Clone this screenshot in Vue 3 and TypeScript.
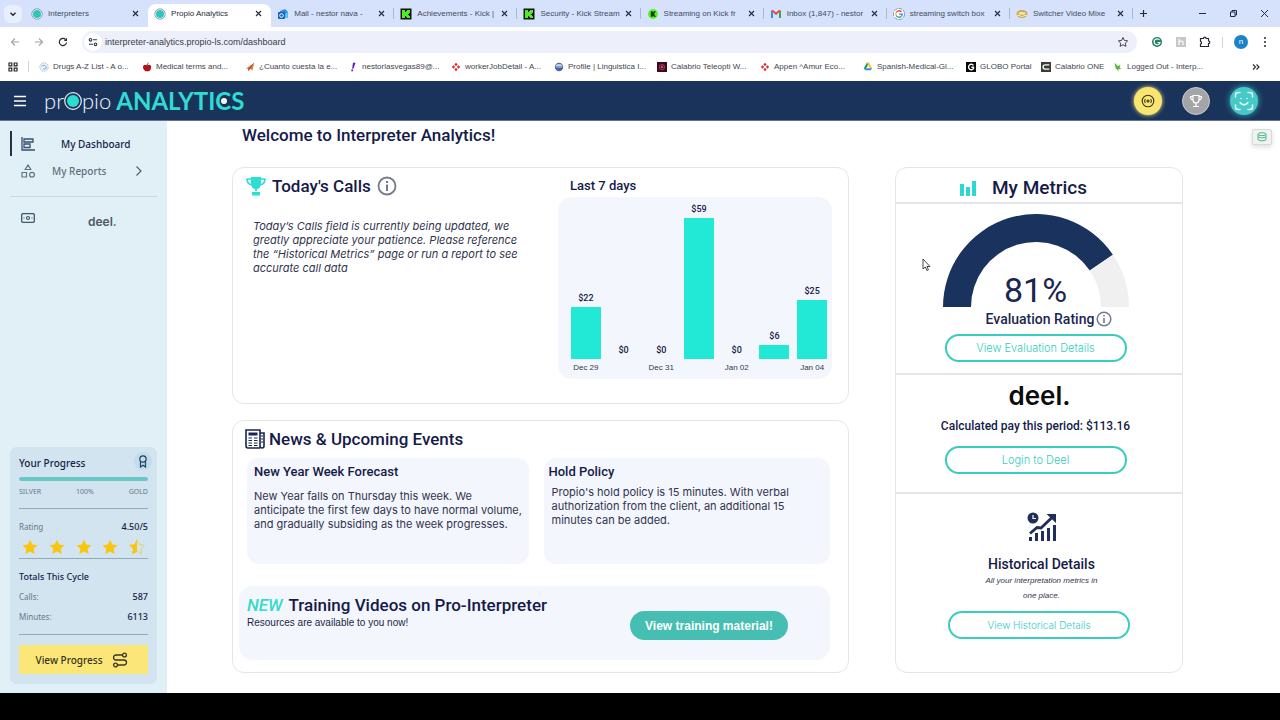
<script setup lang="ts">
interface Tab { title: string; icon: string; active?: boolean }
interface Bookmark { title: string; icon: string }
interface Day { label: string; value: number }

const tabs: Tab[] = [
  { title: 'Interpreters', icon: 'propio' },
  { title: 'Propio Analytics', icon: 'propio', active: true },
  { title: 'Mail - nestor nava - ', icon: 'outlook' },
  { title: 'Achievements - Kick |', icon: 'kick' },
  { title: 'Security - Kick Stream', icon: 'kick' },
  { title: 'Streaming on Kick fr', icon: 'kickround' },
  { title: 'Inbox (1,847) - nestor', icon: 'gmail' },
  { title: 'streaming switch box', icon: 'google' },
  { title: 'Switcher Video Mixe', icon: 'switcher' },
]

const bookmarks: Bookmark[] = [
  { title: 'Drugs A-Z List - A o...', icon: 'drugs' },
  { title: 'Medical terms and...', icon: 'apple' },
  { title: '¿Cuanto cuesta la e...', icon: 'plane' },
  { title: 'nestorlasvegas89@...', icon: 'bang' },
  { title: 'workerJobDetail - A...', icon: 'appen' },
  { title: 'Profile | Linguistica I...', icon: 'globe' },
  { title: 'Calabrio Teleopti W...', icon: 'teleopti' },
  { title: 'Appen ^Amur Eco...', icon: 'appen' },
  { title: 'Spanish-Medical-Gl...', icon: 'drive' },
  { title: 'GLOBO Portal', icon: 'globo' },
  { title: 'Calabrio ONE', icon: 'calabrio' },
  { title: 'Logged Out - Interp...', icon: 'bird' },
]

const days: Day[] = [
  { label: 'Dec 29', value: 22 },
  { label: '', value: 0 },
  { label: 'Dec 31', value: 0 },
  { label: '', value: 59 },
  { label: 'Jan 02', value: 0 },
  { label: '', value: 6 },
  { label: 'Jan 04', value: 25 },
]
const tallestBar = 141
const highest = Math.max(...days.map((day) => day.value))
const barHeight = (value: number): string => `${Math.floor((value / highest) * tallestBar)}px`

const rating = 81
const point = (radius: number, percent: number): string => {
  const angle = Math.PI * (1 - percent / 100)
  return `${(93 + radius * Math.cos(angle)).toFixed(1)} ${(93 - radius * Math.sin(angle)).toFixed(1)}`
}
const arc = (from: number, to: number): string =>
  `M${point(93, from)}A93 93 0 0 1 ${point(93, to)}L${point(65, to)}A65 65 0 0 0 ${point(65, from)}Z`

const starPath = 'M8 0.8l2.3 4.7 5.1 .7-3.7 3.6 .9 5.1L8 12.5l-4.6 2.4 .9-5.1L.6 6.2l5.1-.7z'
const url = 'interpreter-analytics.propio-ls.com/dashboard'
</script>

<template>
  <div class="screen">
    <div class="tabstrip">
      <button class="tab-search" aria-label="Search tabs">
        <svg width="8" height="8" viewBox="0 0 8 8"><path d="M1.500 2.700L4 5.200l2.500-2.500" fill="none" stroke="#1f2530" stroke-width="1.400" /></svg>
      </button>
      <div class="tabs">
        <div v-for="(tab, i) in tabs" :key="i" class="tab" :class="{ active: tab.active }">
          <svg class="fav" viewBox="0 0 12 12" aria-hidden="true">
            <template v-if="tab.icon === 'propio'">
              <circle cx="6" cy="6" r="5.200" fill="#fff" stroke="#70889e" stroke-width=".8" /><circle cx="6" cy="6" r="4" fill="#2fc5bb" />
            </template>
            <template v-else-if="tab.icon === 'outlook'">
              <path d="M3 3l5-2 3 3v6H3z" fill="#2b8ee6" /><rect x="1" y="4" width="7" height="7" rx="1" fill="#1165c1" /><circle cx="4.500" cy="7.500" r="1.800" fill="none" stroke="#fff" /><path d="M8 6l3-2v6H8z" fill="#5bc0f5" />
            </template>
            <template v-else-if="tab.icon === 'kick'">
              <rect x=".5" y=".5" width="11" height="11" fill="#111" /><path d="M2 2h3v2h1V3h1V2h3v3H9v1H8v1h1v1h1v2H7V9H6V8H5v2H2z" fill="#49ef20" />
            </template>
            <template v-else-if="tab.icon === 'kickround'">
              <circle cx="6" cy="6" r="5" fill="#59f32b" /><path d="M4 3.500h1.500V5L7 3.500h1.500L6.800 6l1.700 2.500H7L5.500 7v1.500H4z" fill="#123b0b" stroke="#123b0b" stroke-width=".5" />
            </template>
            <template v-else-if="tab.icon === 'gmail'">
              <path d="M1 10V2.500L3 4v6z" fill="#4285f4" /><path d="M11 10V2.500L9 4v6z" fill="#34a853" /><path d="M1 2.500l2-.5 3 2.500L9 2l2 .5-5 4.500z" fill="#ea4335" />
            </template>
            <template v-else-if="tab.icon === 'google'">
              <circle cx="6" cy="6" r="5.600" fill="#fff" stroke="#5c84c4" stroke-width=".8" stroke-dasharray="4 1" /><path d="M8.500 3.800A3.300 3.300 0 0 0 3.200 4.500" fill="none" stroke="#ea4335" stroke-width="1.300" /><path d="M3.200 4.500a3.300 3.300 0 0 0 0 3" fill="none" stroke="#fbbc05" stroke-width="1.300" /><path d="M3.200 7.500a3.300 3.300 0 0 0 5 1" fill="none" stroke="#34a853" stroke-width="1.300" /><path d="M6 6.200h3.200a3.300 3.300 0 0 1-1 2.300" fill="none" stroke="#4285f4" stroke-width="1.300" />
            </template>
            <template v-else>
              <ellipse cx="6" cy="6" rx="5.500" ry="4" fill="#c7a646" /><ellipse cx="6" cy="5.200" rx="3.600" ry="1.500" fill="#eee3a5" /><path d="M1 7q5 3 10 0" stroke="#fff" fill="none" stroke-width=".8" />
            </template>
          </svg>
          <span class="tab-title">{{ tab.title }}</span>
          <button class="tab-close" :aria-label="`Close ${tab.title}`">
            <svg width="7" height="7" viewBox="0 0 7 7"><path d="M1 1l5 5M6 1L1 6" stroke="#222a38" stroke-width="1.100" /></svg>
          </button>
        </div>
      </div>
      <div class="window-tools">
        <button aria-label="New tab"><svg width="9" height="9" viewBox="0 0 9 9"><path d="M4.500 1v7M1 4.500h7" stroke="#222a38" stroke-width="1.200" /></svg></button>
        <span class="spring"></span>
        <button aria-label="Minimize"><svg width="9" height="9" viewBox="0 0 9 9"><path d="M1 4.500h7" stroke="#222a38" /></svg></button>
        <button aria-label="Restore"><svg width="9" height="9" viewBox="0 0 9 9"><path d="M1.500 3h4.500v4.500H1.500zM3 3V1.500h4.500V6H6" fill="none" stroke="#222a38" /></svg></button>
        <button aria-label="Close window"><svg width="9" height="9" viewBox="0 0 9 9"><path d="M1 1l7 7M8 1L1 8" stroke="#222a38" /></svg></button>
      </div>
    </div>

    <div class="toolbar">
      <button aria-label="Back"><svg width="10" height="10" viewBox="0 0 10 10"><path d="M9 5H1.500M5 1.500L1.500 5 5 8.500" fill="none" stroke="#a0a4ab" stroke-width="1.100" /></svg></button>
      <button aria-label="Forward"><svg width="10" height="10" viewBox="0 0 10 10"><path d="M1 5h7.500M5 1.500L8.500 5 5 8.500" fill="none" stroke="#a0a4ab" stroke-width="1.100" /></svg></button>
      <button aria-label="Reload"><svg width="10" height="10" viewBox="0 0 10 10"><path d="M8.500 5.500A3.600 3.600 0 1 1 7.500 2.500" fill="none" stroke="#24282f" stroke-width="1.200" /><path d="M9 .8v3.200H5.800z" fill="#24282f" /></svg></button>
      <div class="omnibox">
        <span class="site-info"><svg width="10" height="10" viewBox="0 0 10 10"><g fill="none" stroke="#333942" stroke-width="1.100"><circle cx="2.500" cy="2.800" r="1.300" /><path d="M5 2.800h4M1 7.300h4" /><circle cx="7.500" cy="7.300" r="1.300" /></g></svg></span>
        <input type="text" aria-label="Address" :value="url" />
        <svg class="bookmark-star" width="10" height="10" viewBox="0 0 16 16"><path :d="starPath" fill="none" stroke="#333942" stroke-width="1.500" /></svg>
      </div>
      <div class="extensions">
        <svg width="12" height="12" viewBox="0 0 12 12"><circle cx="6" cy="6" r="5" fill="#1f8264" /><path d="M8.500 4A3 3 0 1 0 9 6.500H6.500" fill="none" stroke="#fff" stroke-width="1.200" /></svg>
        <svg width="12" height="12" viewBox="0 0 12 12"><rect x="1" y="1" width="10" height="10" fill="#c6c7c9" /><path d="M4 3v6M4 6q3-2 4 0v3" fill="none" stroke="#fff" stroke-width="1.200" /></svg>
        <svg width="12" height="12" viewBox="0 0 12 12"><path d="M1.500 2.500h3a1.300 1.300 0 0 1 2.600 0h2.400V5a1.300 1.300 0 0 1 0 2.600v2.900h-8V8a1.400 1.400 0 0 0 0-2.700z" fill="none" stroke="#24282f" stroke-width="1.200" /></svg>
        <span class="rule"></span>
        <span class="avatar">n</span>
        <svg width="4" height="12" viewBox="0 0 4 12"><g fill="#24282f"><circle cx="2" cy="2" r="1" /><circle cx="2" cy="6" r="1" /><circle cx="2" cy="10" r="1" /></g></svg>
      </div>
    </div>

    <nav class="bookmarks" aria-label="Bookmarks">
      <div class="apps"><svg width="10" height="10" viewBox="0 0 10 10"><path d="M1 1h2.800v2.800H1zM6.200 1H9v2.800H6.200zM1 6.200h2.800V9H1zM6.200 6.200H9V9H6.200z" fill="none" stroke="#24282f" stroke-width="1.200" /></svg><span class="rule"></span></div>
      <a v-for="(mark, i) in bookmarks" :key="i" href="#">
        <svg width="10" height="10" viewBox="0 0 12 12" aria-hidden="true">
          <template v-if="mark.icon === 'drugs'"><circle cx="6" cy="6" r="5" fill="#edf5fb" stroke="#94b5d3" stroke-dasharray="2 1" /><path d="M3 5q3-3 6 1-1 4-4 2" fill="none" stroke="#6d9bc4" /></template>
          <template v-else-if="mark.icon === 'apple'"><path d="M6 4q4-2 5 1 0 5-3 6H4Q1 9 1 6q1-4 5-2z" fill="#b1121b" /><path d="M6 4Q6 2 8 1" stroke="#4d321c" fill="none" /></template>
          <template v-else-if="mark.icon === 'plane'"><path d="M1 8l10-7-2 9-3-2-2 3V8z" fill="#e27a3a" /><path d="M11 1L4 8v3z" fill="#b5352b" /></template>
          <template v-else-if="mark.icon === 'bang'"><path d="M6 1h3L6.500 8H5zM4 9h2v2H4z" fill="#5b16c4" /></template>
          <template v-else-if="mark.icon === 'appen'"><path d="M6 1l2 2-2 2-2-2zM9 4l2 2-2 2-2-2zM3 4l2 2-2 2-2-2zM6 7l2 2-2 2-2-2z" fill="#d83232" /></template>
          <template v-else-if="mark.icon === 'globe'"><circle cx="6" cy="6" r="5" fill="#55678f" /><ellipse cx="6" cy="5" rx="4" ry="2.500" fill="#c7d2ec" /><path d="M2 6h8M3 8h7" stroke="#2853bd" /></template>
          <template v-else-if="mark.icon === 'teleopti'"><rect width="12" height="12" fill="#3a0a1d" /><circle cx="6" cy="6" r="3" fill="none" stroke="#a72a50" stroke-width="1.500" /><circle cx="6" cy="6" r="1" fill="#eee" /></template>
          <template v-else-if="mark.icon === 'drive'"><path d="M4.500 1h3L4 7.500 2.500 10 1 7.500z" fill="#1ca261" /><path d="M7.500 1L11 7.500H8L4.500 1z" fill="#fcc934" /><path d="M4 7.500h7L9.500 10h-7z" fill="#4285f4" /></template>
          <template v-else-if="mark.icon === 'globo'"><rect width="12" height="12" fill="#090909" /><path d="M9 4A3.300 3.300 0 1 0 9 8V6.300H6.500" fill="none" stroke="#fff" stroke-width="1.600" /></template>
          <template v-else-if="mark.icon === 'calabrio'"><rect width="12" height="12" fill="#3b3d3b" /><path d="M10 3.500H5a2.500 2.500 0 0 0 0 5h5" fill="none" stroke="#fff" stroke-width="1.600" /></template>
          <template v-else><path d="M2 1l4 4 3-2-1 4 2 1-4 1 1 3-4-5z" fill="#59b63d" /></template>
        </svg>
        <span>{{ mark.title }}</span>
      </a>
      <button class="more" aria-label="More bookmarks"><svg width="8" height="8" viewBox="0 0 8 8"><path d="M1 1.500L3.500 4 1 6.500M4.500 1.500L7 4 4.500 6.500" fill="none" stroke="#24282f" stroke-width="1.100" /></svg></button>
    </nav>

    <header class="app-header">
      <button class="burger" aria-label="Menu"><svg width="12" height="12" viewBox="0 0 12 12"><path d="M0 1.500h12M0 6h12M0 10.500h12" stroke="#fff" stroke-width="1.400" /></svg></button>
      <div class="brand">
        <span class="brand-light">pr</span>
        <svg class="ring" width="18" height="18" viewBox="0 0 18 18"><circle cx="9" cy="9" r="8.300" fill="none" stroke="#e7eef7" stroke-width="1.200" /><circle cx="9" cy="9" r="6" fill="#2cdccf" /></svg>
        <span class="brand-light">pio</span>
        <span class="brand-bold">ANALYTI<span class="dotted">C</span>S</span>
      </div>
      <div class="header-actions">
        <button class="round yellow" aria-label="Rewards"><svg width="14" height="14" viewBox="0 0 14 14"><g fill="none" stroke="#3a3512" stroke-width="1.100"><circle cx="7" cy="7" r="5.800" /><circle cx="7" cy="7" r="1" /><path d="M4.300 9Q2.800 7 4.300 5M9.700 5q1.500 2 0 4" /></g></svg></button>
        <button class="round grey" aria-label="Achievements"><svg width="14" height="14" viewBox="0 0 14 14"><g fill="none" stroke="#fff" stroke-width="1.200"><path d="M4 1.500h6V6q0 3-3 3T4 6zM4 2.500H1.500Q1.500 6 4.300 6M10 2.500h2.500Q12.500 6 9.700 6M7 9v3M4 12.500h6" /></g></svg></button>
        <button class="round teal" aria-label="Profile"><svg width="20" height="20" viewBox="0 0 20 20"><g fill="none" stroke="#e8ffff" stroke-width="1.500" stroke-linecap="round"><path d="M1.500 6V4Q1.500 1.500 4 1.500h2M14 1.500h2q2.500 0 2.500 2.500v2M18.500 14v2q0 2.500-2.500 2.500h-2M6 18.500H4Q1.500 18.500 1.500 16v-2M6 11.500q4 4.500 8 0M7 7.500v.1M13 7.500v.1" /></g></svg></button>
      </div>
    </header>

    <div class="body">
      <aside class="sidebar">
        <nav class="side-nav" aria-label="Main">
          <a class="current" href="#">
            <svg width="14" height="14" viewBox="0 0 14 14"><path d="M1 0v13h13M3 2h9v3H3zM3 7h6v3.500H3z" fill="none" stroke="#35506a" stroke-width="1.300" /></svg>
            <span>My Dashboard</span>
          </a>
          <a class="reports" href="#">
            <svg width="14" height="14" viewBox="0 0 14 14"><g fill="none" stroke="#5f7482" stroke-width="1.200"><path d="M7 1l2.800 4.500H4.200zM1 8.500h4.500V13H1z" /><circle cx="11" cy="10.700" r="2.400" /></g></svg>
            <span>My Reports</span>
            <svg width="8" height="12" viewBox="0 0 8 12"><path d="M1.500 1.500L6 6l-4.500 4.500" fill="none" stroke="#4e626f" stroke-width="1.200" /></svg>
          </a>
          <hr />
          <a class="pay" href="#">
            <svg width="14" height="10" viewBox="0 0 14 10"><rect x=".7" y=".7" width="12.600" height="8.600" rx="1" fill="none" stroke="#435768" stroke-width="1.300" /><circle cx="7" cy="5" r="1.500" fill="none" stroke="#435768" stroke-width="1.200" /><path d="M2.500 5h1M10.500 5h1" stroke="#435768" /></svg>
            <span class="deel">deel.</span>
          </a>
        </nav>

        <section class="progress-card">
          <div class="line title"><h2>Your Progress</h2>
            <span class="medal"><svg width="10" height="13" viewBox="0 0 10 13"><g fill="none" stroke="#1d4462" stroke-width="1.200"><circle cx="5" cy="4" r="3.200" /><path d="M2.500 6v6L5 10.300 7.500 12V6" /></g></svg></span>
          </div>
          <div class="track"></div>
          <div class="line levels"><span>SILVER</span><span>100%</span><span>GOLD</span></div>
          <div class="line rating"><span>Rating</span><b>4.50/5</b></div>
          <div class="stars">
            <svg v-for="n in 5" :key="n" width="16" height="16" viewBox="0 0 16 16">
              <path v-if="n < 5" :d="starPath" fill="#fac60d" />
              <template v-else><path :d="starPath" fill="none" stroke="#efcc50" stroke-width=".8" /><path d="M8 .8v11.700l-4.600 2.400 .9-5.100L.6 6.200l5.100-.7z" fill="#fac60d" /></template>
            </svg>
          </div>
          <h3>Totals This Cycle</h3>
          <div class="line total"><span>Calls:</span><b>587</b></div>
          <div class="line total"><span>Minutes:</span><b>6113</b></div>
          <button class="view-progress">View Progress
            <svg width="16" height="16" viewBox="0 0 16 16"><g fill="none" stroke="#3c3426" stroke-width="1.300"><circle cx="12.500" cy="3" r="1.900" /><circle cx="3.500" cy="13" r="1.900" /><path d="M10.600 3H4a2.500 2.500 0 0 0 0 5h8a2.500 2.500 0 0 1 0 5H5.400" /></g></svg>
          </button>
        </section>
      </aside>

      <main>
        <div class="welcome">
          <h1>Welcome to Interpreter Analytics!</h1>
          <button class="data-button" aria-label="Data"><svg width="10" height="10" viewBox="0 0 10 10"><g fill="none" stroke="#4cba85"><ellipse cx="5" cy="2.200" rx="4" ry="1.500" /><path d="M1 2.200v5.600q4 2.500 8 0V2.200M1 5q4 2 8 0" /></g></svg></button>
        </div>
        <div class="cards">
          <section class="card today">
            <div class="calls">
              <h2>
                <svg width="20" height="20" viewBox="0 0 20 20"><path d="M5 1h10v7q-1 5-4 5v2H9v-2Q6 13 5 8z" fill="#2be0d2" /><path d="M5 3H1Q1 8 6 9M15 3h4q0 5-5 6" fill="none" stroke="#2be0d2" stroke-width="1.600" /><path d="M6 16h8v3.500H6z" fill="#2be0d2" /></svg>
                Today's Calls
                <svg width="20" height="20" viewBox="0 0 20 20"><circle cx="10" cy="10" r="8.500" fill="none" stroke="#747b8b" stroke-width="1.800" /><path d="M10 5v2M10 8.500V15" stroke="#747b8b" stroke-width="2" /></svg>
              </h2>
              <p>Today’s Calls field is currently being updated, we greatly appreciate your patience. Please reference the “Historical Metrics” page or run a report to see accurate call data</p>
            </div>
            <div class="week">
              <h3>Last 7 days</h3>
              <div class="chart">
                <div v-for="(day, i) in days" :key="i" class="day">
                  <span class="amount">${{ day.value }}</span>
                  <span class="bar" :style="{ height: barHeight(day.value) }"></span>
                  <span class="date">{{ day.label }}</span>
                </div>
              </div>
            </div>
          </section>

          <section class="card news">
            <h2>
              <svg width="20" height="20" viewBox="0 0 20 20"><g fill="none" stroke="#1a2450" stroke-width="1.600"><path d="M15 19H3q-2 0-2-2V1h14v16q0 2 2 2t2-2V4h-4" /></g><path d="M3.500 3.500h9v3h-9z" fill="#1a2450" /><path d="M3.500 9h3.500M9 9h3.500M3.500 11.500H7M9 11.500h3.500M3.500 14H7M9 14h3.500M3.500 16.500H7M9 16.500h3.500M16 7h2M16 10h2M16 13h2" stroke="#1a2450" stroke-width="1.200" /></svg>
              News &amp; Upcoming Events
            </h2>
            <div class="stories">
              <article>
                <h3>New Year Week Forecast</h3>
                <p>New Year falls on Thursday this week. We<br />anticipate the first few days to have normal volume, and gradually subsiding as the week progresses.</p>
              </article>
              <article class="hold">
                <h3>Hold Policy</h3>
                <p>Propio's hold policy is 15 minutes. With verbal authorization from the client, an additional 15 minutes can be added.</p>
              </article>
            </div>
            <div class="training">
              <div>
                <h2><em>NEW</em> Training Videos on Pro-Interpreter</h2>
                <p>Resources are available to you now!</p>
              </div>
              <button>View training material!</button>
            </div>
          </section>

          <section class="card metrics">
            <h2>
              <svg width="16" height="16" viewBox="0 0 16 16"><path d="M0 4h4v12H0zM6 7h4v9H6zM12 1h4v15h-4z" fill="#2bd9d0" /></svg>
              My Metrics
            </h2>
            <div class="evaluation">
              <div class="gauge">
                <svg width="186" height="93" viewBox="0 0 186 93" aria-hidden="true">
                  <path :d="arc(0, rating)" fill="#1a335e" />
                  <path :d="arc(rating, 100)" fill="#f0f0f0" />
                </svg>
                <span>{{ rating }}%</span>
              </div>
              <h3>Evaluation Rating
                <svg width="16" height="16" viewBox="0 0 16 16"><circle cx="8" cy="8" r="6.800" fill="none" stroke="#747b8b" stroke-width="1.500" /><path d="M8 4v1.500M8 7v5" stroke="#747b8b" stroke-width="1.600" /></svg>
              </h3>
              <button>View Evaluation Details</button>
            </div>
            <div class="payment">
              <div class="deel">deel.</div>
              <p>Calculated pay this period: $113.16</p>
              <button>Login to Deel</button>
            </div>
            <div class="history">
              <svg width="30" height="30" viewBox="0 0 30 30"><circle cx="6" cy="6" r="5.500" fill="#1f2f5a" /><path d="M6 3v3.500h3" fill="none" stroke="#fff" stroke-width="1.200" /><path d="M3 21.500l7-6 4 .5L26 4.500" fill="none" stroke="#1f2f5a" stroke-width="2.800" /><path d="M19.500 2H29v9z" fill="#1f2f5a" /><path d="M2 25h3v4H2zM8 21h3v8H8zM14 19h3v10h-3zM20 16h3v13h-3zM26 13h3v16h-3z" fill="#1f2f5a" /></svg>
              <h3>Historical Details</h3>
              <p>All your interpretation metrics in one place.</p>
              <button>View Historical Details</button>
            </div>
          </section>
        </div>
        <svg class="pointer" width="9" height="13" viewBox="0 0 9 13"><path d="M1 1v10l2.300-2 1.600 3.500 1.500-.7L4.900 8.500H8z" fill="#fff" stroke="#333" stroke-width=".9" /></svg>
      </main>
    </div>
    <div class="bottom-strip"></div>
  </div>
</template>

<style>
body { margin: 0; }
</style>

<style scoped>
* { box-sizing: border-box; }
h1, h2, h3, p { margin: 0; font-weight: 500; }
button { margin: 0; padding: 0; border: 0; background: none; font: inherit; color: inherit; cursor: pointer; display: flex; align-items: center; justify-content: center; }
a { color: inherit; text-decoration: none; }
svg { flex: none; display: block; }

.screen { min-height: 100vh; display: flex; flex-direction: column; background: #fff; font-family: "Liberation Sans", Arial, sans-serif; color: #151b48; }

.tabstrip { height: 27px; display: flex; background: #d6e2fc; font-size: 8px; color: #414b5e; }
.tab-search { width: 18px; height: 18px; margin: 5px 3px 0 4px; border-radius: 6px; background: #e8effd; }
.tabs { flex: 1; min-width: 0; display: flex; }
.tab { flex: 1; min-width: 0; height: 27px; display: flex; align-items: center; gap: 5px; padding: 0 9px 0 6px; position: relative; }
.tab.active { background: #fff; border-radius: 8px 8px 0 0; color: #262c38; height: 23px; margin-top: 4px; padding-bottom: 4px; }
.tab:nth-child(n+3)::after { content: ""; position: absolute; right: 0; top: 8px; width: 1px; height: 11px; background: #abb8d3; }
.fav { width: 12px; height: 12px; }
.tab-title { flex: 1; min-width: 0; white-space: nowrap; line-height: 14px; }
.window-tools { width: 147px; display: flex; align-items: center; padding: 0 11px 0 6px; gap: 22px; }
.spring { flex: 1; }

.toolbar { height: 30px; display: flex; align-items: center; padding: 0 13px 0 10px; gap: 14px; font-size: 9px; }
.toolbar > button { width: 10px; height: 10px; }
.omnibox { flex: 1; height: 22px; display: flex; align-items: center; border-radius: 11px; background: #edf0fb; padding: 0 9px 0 2px; gap: 3px; }
.site-info { width: 18px; height: 18px; border-radius: 9px; background: #fff; display: flex; align-items: center; justify-content: center; }
.omnibox input { flex: 1; min-width: 0; border: 0; padding: 0; outline: 0; background: none; font: inherit; color: #373c46; }
.extensions { display: flex; align-items: center; gap: 12px; }
.rule { width: 1px; height: 11px; background: #cdd5e4; }
.extensions .rule { margin: 0 -1px; }
.avatar { width: 14px; height: 14px; margin-right: 3px; border-radius: 7px; background: #1b83c5; color: #fff; font-size: 8px; line-height: 13px; text-align: center; }

.bookmarks { height: 24px; display: grid; grid-template-columns: 31px repeat(9, minmax(0, 103fr)) minmax(0, 75fr) minmax(0, 72fr) minmax(0, 134fr) 18px; align-items: center; padding: 0 15px 5px 8px; font-size: 8px; color: #41464f; }
.bookmarks a { display: flex; align-items: center; gap: 4px; white-space: nowrap; }
.apps { display: flex; align-items: center; gap: 10px; }

.app-header { height: 40px; display: flex; align-items: center; background: #1a335b; padding: 0 22px 0 14px; border-bottom: 1px solid #647094; }
.burger { width: 12px; height: 12px; }
.brand { display: flex; align-items: center; margin-left: 18px; font-family: Lato, sans-serif; line-height: 32px; }
.brand-light { font-size: 22px; font-weight: 300; color: #eef3fa; }
.brand-bold { font-size: 24px; font-weight: 700; color: #2fdcd4; margin-left: 5px; }
.dotted { position: relative; }
.dotted::after { content: ""; position: absolute; left: 6px; top: 12px; width: 6px; height: 6px; border-radius: 3px; background: #fff; }
.header-actions { margin-left: auto; display: flex; gap: 20px; }
.round { width: 28px; height: 28px; border-radius: 14px; }
.yellow { background: #f9e671; box-shadow: 0 0 4px #f9e671; }
.grey { background: #a4a5a8; border: 1px solid #c9cacc; }
.teal { background: #46c9c7; box-shadow: 0 0 6px #3bb3bb; }

.body { flex: 1; display: flex; }
.sidebar { width: 167px; background: #e1eff7; padding: 10px 10px 9px; display: flex; flex-direction: column; justify-content: space-between; font-family: "Noto Sans", sans-serif; }
.side-nav { display: flex; flex-direction: column; font-size: 10px; }
.side-nav a { display: flex; align-items: center; padding-left: 11px; color: #60707b; }
.side-nav .current { height: 25px; border-left: 2px solid #26304d; padding-left: 9px; color: #171d49; font-weight: 500; }
.current span { margin-left: 26px; }
.side-nav .reports { height: 29px; font-weight: 500; }
.reports span { margin: 0 auto 0 17px; }
.reports > svg:last-child { margin-right: 14px; }
.side-nav hr { width: 100%; border: 0; border-top: 1px solid #c9d9e1; margin: 11px 0 10px; }
.side-nav .pay { height: 26px; }
.pay svg { margin-bottom: 4px; }
.deel { font-family: Inter, sans-serif; font-weight: 700; color: #0c0c0c; }
.pay .deel { margin: 2px 0 0 53px; font-size: 12px; font-weight: 600; color: #4b5963; }

.progress-card { background: #d2e4ef; border-radius: 7px; padding: 8px 9px 10px; height: 237px; font-size: 8px; color: #66788b; }
.line { display: flex; justify-content: space-between; align-items: center; }
.line b { font-size: 9px; font-weight: 500; color: #171d49; }
.title { height: 16px; }
.progress-card h2 { font-size: 10px; line-height: 16px; color: #171d49; }
.medal { width: 18px; height: 18px; margin: -4px -4px 0 0; border-radius: 9px; background: #c1dcea; display: flex; align-items: center; justify-content: center; }
.track { height: 4px; margin-top: 6px; border-radius: 2px; background: #66c9c5; }
.levels { height: 20px; font-size: 7px; }
.rating { height: 28px; margin-top: 7px; padding-top: 7px; border-top: 1px solid #93a9ba; }
.stars { display: flex; justify-content: space-between; height: 23px; padding: 3px 3px 0; border-bottom: 1px solid #93a9ba; }
.progress-card h3 { height: 27px; padding-top: 10px; font-size: 9px; line-height: 16px; color: #171d49; }
.total { height: 20px; }
.view-progress { width: 100%; height: 29px; margin-top: 19px; padding-right: 4px; gap: 9px; background: #fbe778; color: #37331f; font-size: 10px; font-weight: 500; position: relative; }
.view-progress::before { content: ""; position: absolute; left: 0; right: 0; top: -11px; height: 1px; background: #93a9ba; }

main { flex: 1; min-width: 0; position: relative; }
h1, .card h2, .card h3, .training button, .payment p { font-family: Roboto, sans-serif; font-weight: 500; }
.welcome { height: 46px; padding: 2px 8px 0 75px; display: flex; justify-content: space-between; align-items: flex-start; }
h1 { font-size: 17px; line-height: 24px; }
.data-button { width: 20px; height: 16px; margin-top: 6px; border: 1px solid #d5dbd9; border-radius: 2px; background: #f1f3f3; box-shadow: 0 2px 5px #ddd; }
.cards { display: grid; grid-template-columns: minmax(0, 617fr) minmax(0, 288fr); grid-template-rows: 237px 253px; gap: 16px 46px; padding: 0 97px 20px 65px; }
.card { border: 1px solid #e4e5e8; border-radius: 12px; background: #fff; }
.card h2 { font-size: 17px; line-height: 20px; display: flex; align-items: center; }
.card h3 { font-size: 13px; line-height: 18px; }
.calls p, article p { font-family: Inter, sans-serif; font-size: 11px; line-height: 14px; font-weight: 400; color: #30344e; }

.today { display: flex; padding: 8px 16px 0 13px; }
.calls { flex: 1; }
.calls h2 { gap: 6px; }
.calls p { margin: 23px 0 0 7px; width: 272px; font-style: italic; }
.week { width: 274px; padding-top: 1px; }
.week h3 { margin-left: 12px; }
.chart { display: grid; grid-template-columns: repeat(7, 1fr); height: 182px; margin-top: 2px; padding: 0 1px 4px 9px; border-radius: 14px; background: #f3f6fd; }
.day { display: flex; flex-direction: column; align-items: center; justify-content: flex-end; }
.amount { font-family: Roboto, sans-serif; font-weight: 500; font-size: 9px; line-height: 10px; margin-bottom: 4px; }
.bar { width: 30px; background: #22e8d6; }
.date { height: 16px; font-size: 8px; line-height: 18px; color: #343a4c; white-space: nowrap; }

.news { padding: 8px 18px 12px 6px; display: flex; flex-direction: column; }
.news > h2 { gap: 4px; margin-left: 6px; }
.stories { display: grid; grid-template-columns: 282fr 287fr; gap: 15px; margin: 9px 0 0 8px; }
article { height: 106px; border-radius: 12px; background: #f3f6fd; padding: 5px 0 0 7px; }
article p { margin-top: 8px; }
.card .hold { padding: 5px 30px 0 5px; }
.card .hold p { margin: 4px 0 0 3px; }
.training { display: flex; justify-content: space-between; height: 74px; margin-top: 22px; padding: 9px 42px 0 8px; border-radius: 14px; background: #f3f6fd; }
.training em { color: #32dcc8; margin-right: 6px; }
.training p { font-size: 10px; line-height: 16px; color: #22263f; }
.training button { width: 158px; height: 29px; margin-top: 16px; border-radius: 15px; background: #46beb1; color: #fff; font-family: "Liberation Sans", sans-serif; font-size: 12px; font-weight: 700; }

.metrics { grid-column: 2; grid-row: 1 / 3; display: flex; flex-direction: column; overflow: hidden; }
.card.metrics h2 { height: 36px; font-size: 19px; justify-content: center; gap: 16px; padding: 5px 31px 0 0; border-bottom: 2px solid #e4e5e7; }
.evaluation, .payment, .history { display: flex; flex-direction: column; align-items: center; }
.evaluation { height: 171px; padding: 10px 7px 0 0; border-bottom: 2px solid #e4e5e7; }
.gauge { display: grid; justify-items: center; align-items: end; }
.gauge > * { grid-area: 1 / 1; }
.gauge span { font: 400 34px/34px Roboto, sans-serif; color: #1a2650; }
.evaluation h3 { display: flex; align-items: center; gap: 2px; height: 23px; margin-left: 27px; font-size: 14px; color: #1a2650; }
.evaluation button, .payment button, .history button { width: 182px; height: 28px; border: 2px solid #38cdbe; border-radius: 14px; color: #35cdc0; font-family: Inter, sans-serif; font-size: 11px; font-weight: 300; }
.evaluation button { margin-top: 4px; }
.payment { height: 119px; padding: 4px 7px 0 0; border-bottom: 2px solid #e4e5e7; }
.payment .deel { font-size: 26px; line-height: 34px; font-weight: 600; margin-left: 8px; }
.payment p { font-size: 12px; line-height: 18px; margin-top: 4px; }
.payment button { margin-top: 11px; }
.history { padding-top: 18px; }
.history > svg { margin-left: 5px; }
.card .history h3 { font-size: 14px; margin: 13px 0 0 5px; }
.history p { width: 120px; margin-left: 5px; text-align: center; font-size: 8px; line-height: 15px; font-style: italic; color: #33374d; }
.history button { margin-top: 8px; font-size: 10px; }
.pointer { position: absolute; left: 755px; top: 137px; }
.bottom-strip { height: 27px; background: #000; }
</style>
